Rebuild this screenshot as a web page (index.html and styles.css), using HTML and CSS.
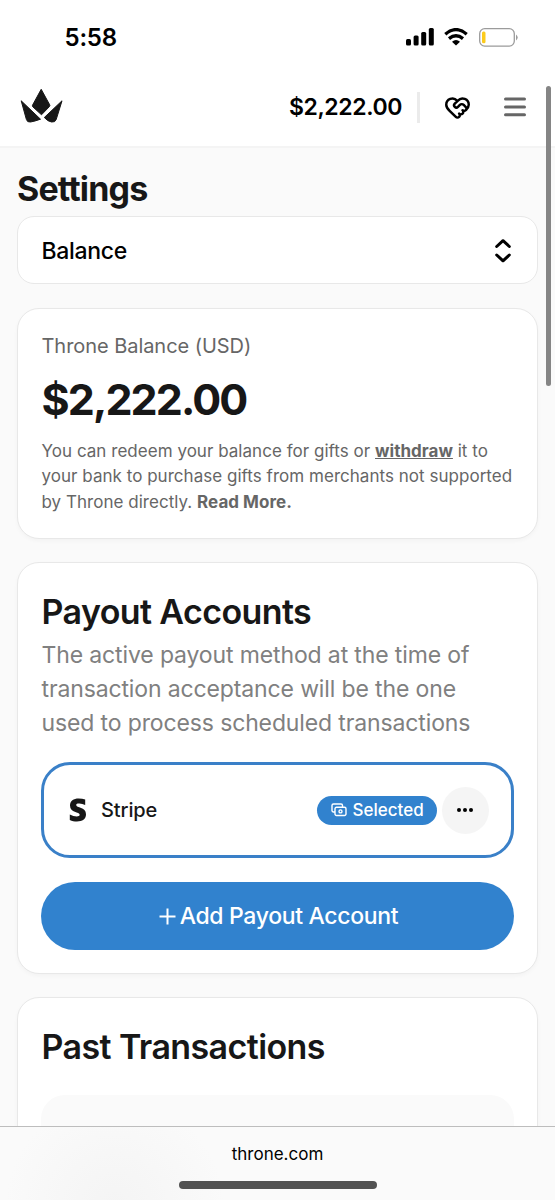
FILE: index.html
```
<!DOCTYPE html>
<html lang="en">
<head>
<meta charset="utf-8">
<title>Settings – Throne</title>
<link rel="stylesheet" href="styles.css">
</head>
<body>
<div class="screen">
  <div class="statusbar">
    <span class="clock">5:58</span>
    <div class="status-icons">
      <svg class="signal" width="28" height="18" viewBox="0 0 28 18"><rect x="0" y="11" width="5" height="6.500" rx="1.500"/><rect x="7.600" y="7.500" width="5" height="10" rx="1.500"/><rect x="15.200" y="4" width="5" height="13.500" rx="1.500"/><rect x="22.800" y="0" width="5" height="17.500" rx="1.500"/></svg>
      <svg class="wifi" width="24" height="18" viewBox="0 0 24 18"><path d="M1.300 6.200Q12-3 22.700 6.200M5 10.600Q12 4.900 19 10.600" fill="none" stroke="#000" stroke-width="3.300"/><path d="M12 17.500 8 13.700Q12 10.300 16 13.700Z"/></svg>
      <svg class="battery" width="39" height="19" viewBox="0 0 39 19"><rect x=".7" y=".7" width="34.600" height="17.400" rx="5" fill="none" stroke="#9b9b9b" stroke-width="1.300"/><rect x="3" y="3.500" width="3.500" height="11.800" rx="1.500" fill="#fccb1c"/><path d="M37 6.500q3.400 3 0 6z" fill="#9b9b9b"/></svg>
    </div>
  </div>
  <header class="header">
    <svg class="logo" width="44" height="36" viewBox="0 0 44 36" fill="#171717" stroke="#171717" stroke-linejoin="round"><path d="M21.200 1.300 29.700 16.800Q30.200 17.700 29.500 18.500L21.500 26.800 12.700 18.700Q12.100 18.100 12.500 17.200Z" stroke-width="1"/><path d="M1.200 12.800 20.500 31.200Q15 33.200 10.500 34 7.200 34.500 6.400 31.500Z" stroke-width="1"/><path d="M42 12.800 36.200 31.500Q35.200 34.500 31.500 34 27.500 33.300 24.300 29.500Z" stroke-width="1"/></svg>
    <div class="header-actions">
      <span class="header-balance">$2,222.00</span>
      <span class="divider"></span>
      <svg class="heart" width="27" height="27" viewBox="0 0 24 24"><path d="M19.414 14.414C21 12.828 22 11.500 22 9.500a5.500 5.500 0 0 0-9.591-3.676.6.6 0 0 1-.818.001A5.500 5.500 0 0 0 2 9.500c0 2.300 1.500 4 3 5.500l5.535 5.362a2 2 0 0 0 2.879.052 2.120 2.120 0 0 0-.004-3 2.124 2.124 0 1 0 3-3 2.124 2.124 0 0 0 3.004 0 2 2 0 0 0 0-2.828l-1.881-1.882a2.410 2.410 0 0 0-3.409 0l-1.710 1.710a2 2 0 0 1-2.828 0 2 2 0 0 1 0-2.828l2.823-2.762"/></svg>
      <svg class="menu" width="22" height="20" viewBox="0 0 22 20"><path d="M1.500 2h19M1.500 9.900h19M1.500 17.800h19"/></svg>
    </div>
  </header>
  <main class="content">
    <h1 class="title">Settings</h1>
    <div class="select">
      <span>Balance</span>
      <svg width="16" height="24" viewBox="0 0 16 24"><path d="M1.700 7.500 8 1.700l6.300 5.800M1.700 16 8 21.800 14.300 16"/></svg>
    </div>
    <section class="card balance">
      <div class="balance-label">Throne Balance (USD)</div>
      <div class="balance-amount">$2,222.00</div>
      <p class="balance-note">You can redeem your balance for gifts or <a class="withdraw">withdraw</a> it to<br>your bank to purchase gifts from merchants not supported<br>by Throne directly. <b>Read More.</b></p>
    </section>
    <section class="card payout">
      <h2 class="heading">Payout Accounts</h2>
      <p class="description">The active payout method at the time of<br>transaction acceptance will be the one<br>used to process scheduled transactions</p>
      <div class="account">
        <svg class="stripe" width="18" height="24" viewBox="0 0 18 24"><path d="M16.200 1.500V7Q13.300 5.600 10.500 5.500C8.700 5.400 7.200 5.800 7.200 7c0 3 9.800 1.800 9.800 9.300 0 4.800-3.700 7.200-9 7.200-2.600 0-5-.5-7.200-1.500V16.400q3.500 2 7 2c1.700 0 2.900-.4 2.900-1.600C10.700 13.600 1 15 1 7.500 1 3 4.500.5 9.700.5q3.500 0 6.500 1Z"/></svg>
        <span class="account-name">Stripe</span>
        <span class="badge">
          <svg width="16" height="14" viewBox="0 0 16 14"><path d="M3.700 9H2.500A1.500 1.500 0 0 1 1 7.500V2.500A1.500 1.500 0 0 1 2.500 1h7.500A1.500 1.500 0 0 1 11.500 2.500V4M5.500 4.300h8A1.500 1.500 0 0 1 15 5.800v5.200a1.500 1.500 0 0 1-1.500 1.500h-8A1.500 1.500 0 0 1 4 11v-5.200A1.500 1.500 0 0 1 5.500 4.300Z"/><circle cx="9.500" cy="8.400" r="1.500"/></svg>
          <span>Selected</span>
        </span>
        <span class="more"><i></i><i></i><i></i></span>
      </div>
      <div class="add"><svg width="17" height="17" viewBox="0 0 17 17"><path d="M8.500.5v16M.5 8.500h16"/></svg><span>Add Payout Account</span></div>
    </section>
    <section class="card transactions">
      <h2 class="heading">Past Transactions</h2>
      <div class="list"></div>
    </section>
  </main>
  <footer class="browserbar">
    <span class="host">throne.com</span>
    <span class="home"></span>
  </footer>
  <div class="scrollbar"></div>
</div>
</body>
</html>
```
FILE: styles.css
```
* { box-sizing: border-box; }
body { margin: 0; font-family: Inter, "Liberation Sans", sans-serif; color: #171717; }
h1, h2, p { margin: 0; }
svg { display: block; flex: none; }
span, h1, h2, p, .balance-label, .balance-amount { white-space: nowrap; }

.screen { position: relative; width: 555px; height: 1200px; overflow: hidden; display: flex; flex-direction: column; background: #fafafa; }

.statusbar { height: 74px; flex: none; background: #fff; display: flex; justify-content: space-between; padding: 0 37px 0 64.500px; align-items: center; }
.clock { font-size: 24px; font-weight: 600; color: #000; letter-spacing: -.2px; }
.status-icons { display: flex; align-items: center; gap: 10px; }
.wifi { margin-right: 1px; }

.header { height: 74px; flex: none; background: #fff; border-bottom: 2px solid #f4f4f4; display: flex; align-items: center; justify-content: space-between; padding: 0 29px 6px 20px; }
.logo { margin-top: -2px; }
.header-actions { display: flex; align-items: center; }
.header-balance { font-size: 23px; font-weight: 600; color: #000; letter-spacing: -.4px; }
.divider { width: 3px; height: 31px; background: #ebebeb; margin: 0 24px 0 15px; }
.heart { fill: none; stroke: #000; stroke-width: 2.200; stroke-linecap: round; stroke-linejoin: round; margin-right: 33px; }
.menu { stroke: #666; stroke-width: 3; stroke-linecap: round; }

.content { flex: 1; min-height: 0; overflow: hidden; padding: 20px 17px 0; display: flex; flex-direction: column; }
.title { font-size: 34px; line-height: 41px; font-weight: 700; letter-spacing: -.85px; margin-bottom: 7px; }
.select { height: 68px; flex: none; background: #fff; border: 1.400px solid #e8e8e8; border-radius: 17px; padding: 1px 26px 0 23.500px; display: flex; align-items: center; justify-content: space-between; font-size: 23px; font-weight: 450; color: #000; letter-spacing: -.33px; margin-bottom: 24px; }
.select svg { fill: none; stroke: #000; stroke-width: 3; stroke-linecap: round; stroke-linejoin: round; }

.card { flex: none; background: #fff; border: 1.400px solid #e8e8e8; border-radius: 22px; padding: 0 23px; box-shadow: 0 2px 4px rgba(0, 0, 0, .03); }
.balance { height: 231px; padding-top: 22px; padding-left: 23.500px; margin-bottom: 23px; color: #666; }
.balance-label { font-size: 20px; line-height: 30px; letter-spacing: -.05px; }
.balance-amount { font-size: 43px; line-height: 52px; font-weight: 700; color: #171717; letter-spacing: -1.900px; margin: 12px 0 13.500px; }
.balance-note { font-size: 17px; line-height: 25.600px; letter-spacing: .03px; }
.withdraw { font-weight: 700; text-decoration: underline; }

.payout { height: 412px; padding-top: 28px; margin-bottom: 23px; }
.heading { font-size: 34px; line-height: 42px; font-weight: 600; letter-spacing: -.6px; padding-left: .5px; }
.description { font-size: 23px; line-height: 34px; color: #808080; letter-spacing: -.13px; margin-top: 5px; padding-left: .5px; }
.account { height: 96px; margin-top: 22px; border: 3px solid #3a80c8; border-radius: 29px; display: flex; align-items: center; padding: 0 22px 0 25px; }
.stripe { fill: #171717; }
.account-name { font-size: 20px; margin-left: 14px; font-weight: 450; letter-spacing: -.1px; }
.badge { margin-left: auto; width: 120px; height: 29px; border-radius: 15px; background: #3182ce; color: #fff; font-size: 17px; font-weight: 500; display: flex; align-items: center; gap: 5.500px; padding-left: 14px; }
.badge svg { fill: none; stroke: #fff; stroke-width: 1.400; }
.more { width: 47px; height: 47px; margin-left: 5px; border-radius: 50%; background: #f5f5f5; display: flex; align-items: center; justify-content: center; gap: 2px; padding-right: 1px; }
.more i { width: 4px; height: 4px; border-radius: 50%; background: #000; }
.add { height: 68px; margin-top: 23.500px; border-radius: 34px; background: #3182ce; color: #fff; font-size: 23px; font-weight: 500; letter-spacing: -.33px; display: flex; align-items: center; justify-content: center; gap: 4px; padding: 1px 0 0 2px; }
.add svg { fill: none; stroke: #fff; stroke-width: 2; }

.transactions { height: 220px; padding-top: 28px; }
.list { height: 120px; margin-top: 27px; border-radius: 24px; background: #fafafa; }

.browserbar { height: 74px; flex: none; border-top: 1px solid #bdbdbd; background: radial-gradient(circle at 115px 80px, #f4f4f4 0, #fafafa 110px); display: flex; flex-direction: column; align-items: center; }
.host { font-size: 17px; line-height: 24px; margin-top: 15px; color: #000; }
.home { width: 198px; height: 8px; border-radius: 4px; background: #525252; margin-top: 15px; }

.scrollbar { position: absolute; left: 546px; top: 86px; width: 5px; height: 300px; border-radius: 3px; background: #858585; }
```
